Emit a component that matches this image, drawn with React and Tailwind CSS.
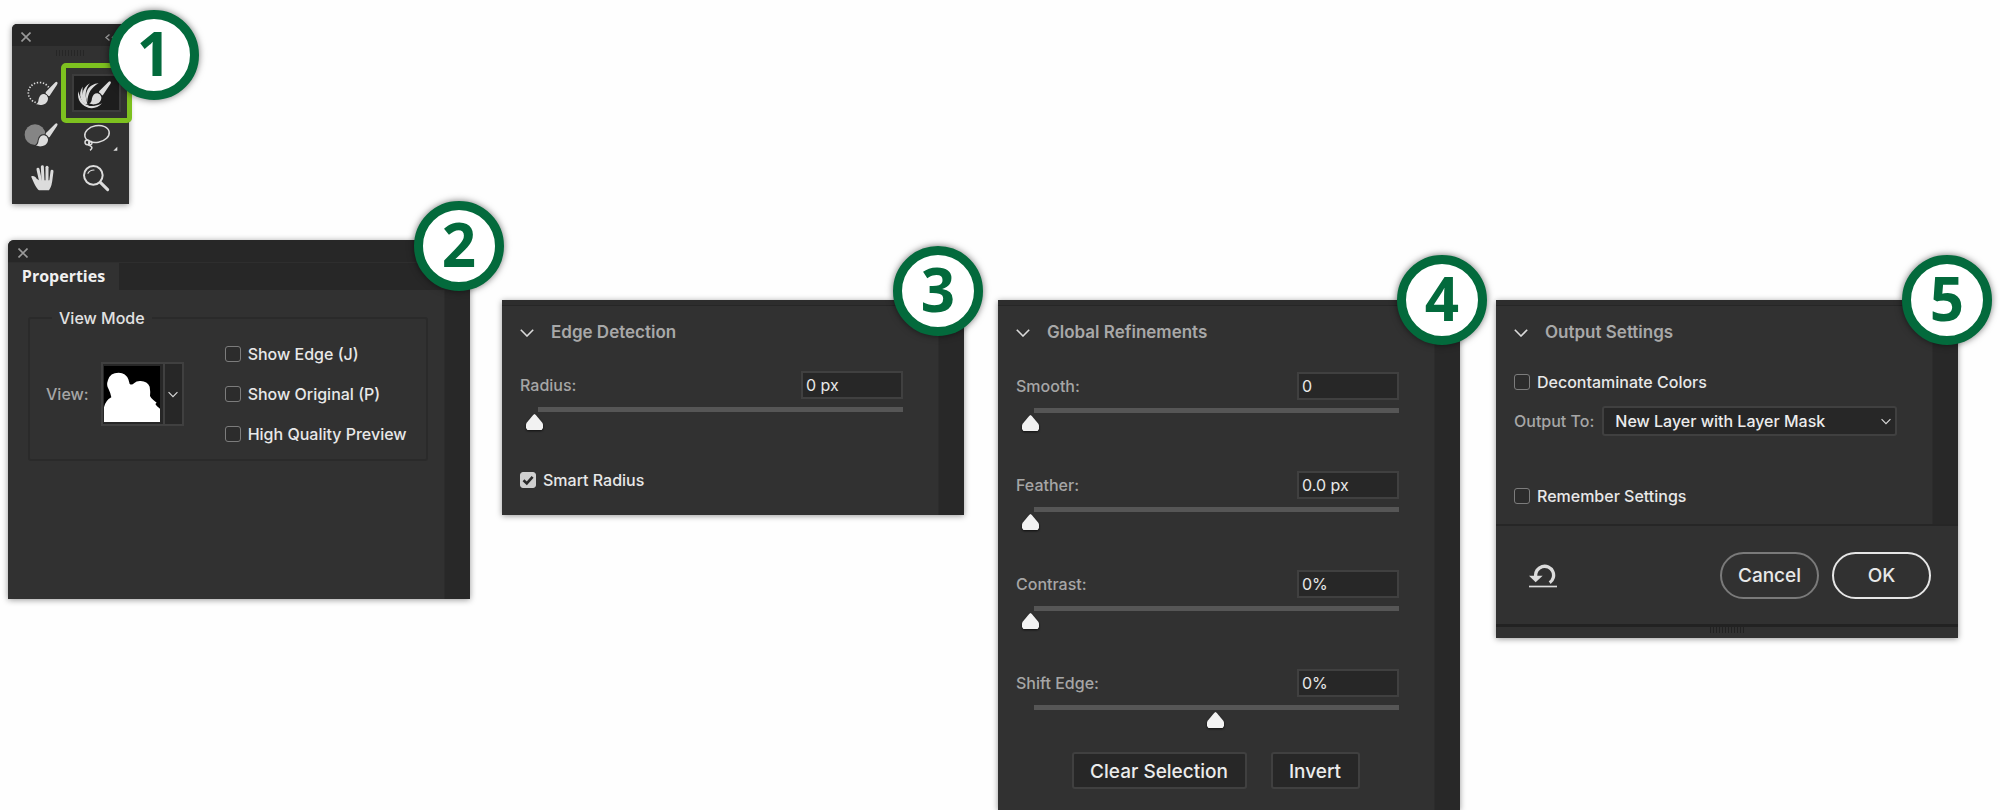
import React from "react";

const font = "font-['Inter','Liberation_Sans',sans-serif]";

function Badge({ n, className }) {
  return (
    <div
      className={`absolute z-10 flex size-[90px] items-center justify-center rounded-full border-[9px] border-[#036a3c] bg-white pb-1 font-['Open_Sans',sans-serif] text-[60px] leading-none font-bold text-[#036a3c] shadow-[0_0_7px_rgba(0,0,0,0.55)] ${className}`}
    >
      {n}
    </div>
  );
}

function CloseIcon() {
  return (
    <svg className="size-[10px]" viewBox="0 0 10 10" stroke="#9a9a9a" strokeWidth="1.6" aria-hidden="true">
      <path d="M0.5 0.5 9.5 9.5M9.5 0.5 0.5 9.5" />
    </svg>
  );
}

function Chevron({ className }) {
  return (
    <svg className={className} viewBox="0 0 14 8" fill="none" stroke="#dadada" strokeWidth="1.6" aria-hidden="true">
      <path d="M0.8 0.8 7 7 13.2 0.8" />
    </svg>
  );
}

function Check({ label, checked = false }) {
  return (
    <label className="flex h-5 items-center gap-[7px] text-[16px] leading-5 font-medium text-[#e8e8e8]">
      <span className="grid size-4 place-items-center">
        <input
          type="checkbox"
          defaultChecked={checked}
          className="peer col-start-1 row-start-1 size-4 appearance-none rounded-[3px] border border-[#7c7c7c] bg-[#2c2c2c] checked:border-[#cfcfcf] checked:bg-[#cfcfcf]"
        />
        <svg
          className="pointer-events-none invisible col-start-1 row-start-1 size-3 peer-checked:visible"
          viewBox="0 0 12 12"
          fill="none"
          stroke="#2b2b2b"
          strokeWidth="2.6"
          aria-hidden="true"
        >
          <path d="M1.5 6.2 4.8 9.4 10.6 2.8" />
        </svg>
      </span>
      {label}
    </label>
  );
}

function SliderRow({ id, label, value, position = 0 }) {
  return (
    <div>
      <div className="flex h-7 items-center justify-between">
        <label htmlFor={id} className="text-[16px] font-medium text-[#a6a6a6]">
          {label}
        </label>
        <input
          id={id}
          type="text"
          defaultValue={value}
          className="h-7 w-[102px] border-2 border-[#404040] bg-[#272727] px-[3px] text-[16px] text-[#e8e8e8]"
        />
      </div>
      <div className="mt-2 ml-[18px] h-[5px] bg-[#565656]" />
      <div className="mt-[2px] -mr-[10px] ml-[6px] flex">
        <input
          type="range"
          min="0"
          max="100"
          defaultValue={position}
          aria-label={label}
          className="h-4 w-full appearance-none bg-transparent drop-shadow-[0_1px_1px_rgba(0,0,0,0.7)] [&::-webkit-slider-thumb]:h-4 [&::-webkit-slider-thumb]:w-[17px] [&::-webkit-slider-thumb]:appearance-none [&::-webkit-slider-thumb]:bg-[#f2f2f2] [&::-webkit-slider-thumb]:[clip-path:polygon(50%_0,58%_6%,96%_54%,100%_64%,100%_88%,92%_100%,8%_100%,0_88%,0_64%,4%_54%,42%_6%)]"
        />
      </div>
    </div>
  );
}

function Section({ title, badge, grow, footer, children, className }) {
  return (
    <section className={`relative flex min-w-0 flex-1 flex-col bg-[#313131] shadow-[0_1px_6px_rgba(0,0,0,0.4)] ${className}`}>
      {badge}
      <div className="h-[6px] border-b border-[#262626] bg-[#2d2d2d]" />
      <div className={`flex ${grow ? "grow" : ""}`}>
        <div className="min-w-0 flex-1 pt-[2px] pr-[35px] pl-[18px]">
          <h2 className="flex h-12 items-center gap-[17px] pt-px text-[17px] font-semibold text-[#a8a8a8]">
            <Chevron className="h-2 w-[14px]" />
            {title}
          </h2>
          {children}
        </div>
        <div className="w-[26px] border-l border-[#2c2c2c] bg-[#282828]" />
      </div>
      {footer}
    </section>
  );
}

function Brush() {
  return (
    <g fill="#dcdcdc">
      <path d="M166 247Q170 244 172 247Q174 250 171 254L149 287Q146 290 142 286L138 282Q135 279 138 275Z" />
      <path d="M133 282Q142 284 144 293C145 305 136 314 124 315C117 316 113 313 108 313C115 309 115 303 116 297C118 287 125 281 133 282Z" />
    </g>
  );
}

function QuickSelectIcon() {
  return (
    <svg viewBox="51 216 159 126" className="h-[42px] w-[53px]" aria-hidden="true">
      <path
        d="M146 262A33 31 0 1 0 108 308"
        fill="none"
        stroke="#dcdcdc"
        strokeWidth="5"
        strokeDasharray="4 5"
      />
      <g stroke="#313131" strokeWidth="4" paintOrder="stroke">
        <Brush />
      </g>
    </svg>
  );
}

function RefineEdgeIcon() {
  return (
    <svg viewBox="210 216 159 126" className="h-[42px] w-[53px]" aria-hidden="true">
      <g fill="#dcdcdc">
        <path d="M235 274C230 300 244 320 272 324C252 312 240 298 235 274Z" />
        <path d="M248 260C232 284 242 308 270 322C252 302 245 284 248 260Z" />
        <path d="M270 250C244 264 240 294 264 316C254 290 254 268 270 250Z" />
        <path d="M296 250C266 252 251 278 262 306C263 280 274 262 296 250Z" />
        <path d="M250 312C262 328 288 330 306 310C286 321 268 320 250 312Z" />
      </g>
      <g transform="translate(160 -2)" stroke="#1d1d1d" strokeWidth="6" paintOrder="stroke">
        <Brush />
      </g>
    </svg>
  );
}

function BrushIcon() {
  return (
    <svg viewBox="51 342 159 126" className="h-[42px] w-[53px]" aria-hidden="true">
      <circle cx="105" cy="404" r="31" fill="#858585" />
      <g transform="translate(0 124)" stroke="#313131" strokeWidth="6" paintOrder="stroke">
        <Brush />
      </g>
    </svg>
  );
}

function LassoIcon() {
  return (
    <svg viewBox="210 342 159 126" className="h-[42px] w-[53px]" fill="none" stroke="#dcdcdc" strokeWidth="4.5" aria-hidden="true">
      <ellipse cx="291" cy="402" rx="37" ry="25" transform="rotate(-10 291 402)" />
      <circle cx="262" cy="427" r="7" />
      <circle cx="271" cy="429" r="5" />
      <path d="M264 434C276 438 280 444 270 451" />
      <path d="M340 452 352 440V452Z" fill="#dcdcdc" stroke="none" />
    </svg>
  );
}

function HandIcon() {
  return (
    <svg viewBox="51 468 159 126" className="h-[42px] w-[53px]" stroke="#dcdcdc" strokeLinecap="round" aria-hidden="true">
      <g strokeWidth="9">
        <path d="M114 508 121 540" />
        <path d="M127 500 129 540" />
        <path d="M141 502 141 540" />
        <path d="M156 514 152 545" />
      </g>
      <path
        d="M94 529C100 526 106 529 110 536L117 541H156C156 556 152 563 147 571H117C109 564 103 552 94 531Z"
        fill="#dcdcdc"
        stroke="none"
      />
    </svg>
  );
}

function ZoomIcon() {
  return (
    <svg viewBox="210 468 159 126" className="h-[42px] w-[53px]" fill="none" stroke="#dcdcdc" strokeLinecap="round" aria-hidden="true">
      <circle cx="280" cy="526" r="28" strokeWidth="6" />
      <path d="M264 520Q269 510 282 510" strokeWidth="3.5" />
      <path d="M301 547 323 569" strokeWidth="9" />
    </svg>
  );
}

function Tool({ label, children }) {
  return (
    <button type="button" aria-label={label} className="flex h-[42px] w-[53px] items-center justify-center">
      {children}
    </button>
  );
}

function ToolPalette() {
  return (
    <section className="relative ml-1 w-[117px] rounded-t-[5px] bg-[#313131] shadow-[0_1px_6px_rgba(0,0,0,0.4)]">
      <Badge n="1" className="-top-[14px] -right-[70px]" />
      <header className="flex h-[22px] items-center justify-between rounded-t-[5px] bg-[#272727] pt-1 pr-[12px] pl-[9px]">
        <button type="button" aria-label="Close tools">
          <CloseIcon />
        </button>
        <svg className="h-[7px] w-3" viewBox="0 0 12 7" fill="none" stroke="#9a9a9a" strokeWidth="1.4" aria-hidden="true">
          <path d="M4.5 0.5 1 3.5 4.5 6.5M11 0.5 7.5 3.5 11 6.5" />
        </svg>
      </header>
      <div className="flex h-[26px] justify-center pt-1">
        <svg className="h-[6px] w-[31px]" viewBox="0 0 31 6" stroke="#262626" aria-hidden="true">
          <path d="M1 3H31" strokeWidth="6" strokeDasharray="1 2" />
        </svg>
      </div>
      <div className="grid grid-cols-[53px_53px] place-items-center justify-start pb-[6px] pl-[5px]">
        <Tool label="Quick selection tool">
          <QuickSelectIcon />
        </Tool>
        <button
          type="button"
          aria-label="Refine edge brush tool"
          aria-pressed="true"
          className="relative flex h-[38px] w-[49px] items-center justify-center border-2 border-[#3c3c3c] bg-[#1d1d1d]"
        >
          <span className="flex shrink-0">
            <RefineEdgeIcon />
          </span>
          <span className="absolute -inset-[13px] rounded-[5px] border-[5px] border-[#7dc11f]" />
        </button>
        <Tool label="Brush tool">
          <BrushIcon />
        </Tool>
        <Tool label="Lasso tool">
          <LassoIcon />
        </Tool>
        <Tool label="Hand tool">
          <HandIcon />
        </Tool>
        <Tool label="Zoom tool">
          <ZoomIcon />
        </Tool>
      </div>
    </section>
  );
}

function ViewPicker() {
  return (
    <div className="flex items-center gap-3">
      <label htmlFor="view" className="text-[16px] font-medium text-[#a6a6a6]">
        View:
      </label>
      <div className="relative flex h-16 w-[83px] items-center border-2 border-[#404040] bg-[#272727]">
        <div className="flex h-full w-[62px] items-center border-r-2 border-[#404040] pl-[1px]">
          <svg className="size-[56px]" viewBox="0 0 168 168" aria-hidden="true">
            <rect width="168" height="168" fill="#000" />
            <path
              d="M0 168V124Q4 104 22 94Q20 82 14 70Q6 58 12 42Q18 20 44 20Q66 21 73 40Q76 50 77 54Q84 58 90 52Q98 44 110 45Q130 46 137 62Q140 80 138 90Q142 98 148 102L158 110L154 114Q158 122 168 128V168Z"
              fill="#fff"
            />
          </svg>
        </div>
        <div className="flex flex-1 justify-center">
          <Chevron className="h-[7px] w-[10px]" />
        </div>
        <select id="view" className="absolute inset-0 h-full w-full cursor-pointer opacity-0" />
      </div>
    </div>
  );
}

function PropertiesPanel() {
  return (
    <section className="relative rounded-t-[6px] bg-[#313131] shadow-[0_1px_6px_rgba(0,0,0,0.4)]">
      <Badge n="2" className="-top-[39px] -right-[34px]" />
      <header className="flex h-[23px] items-center rounded-t-[6px] border-b border-[#2e2e2e] bg-[#272727] pt-[3px] pl-[10px]">
        <button type="button" aria-label="Close properties">
          <CloseIcon />
        </button>
      </header>
      <div className="flex h-[27px] bg-[#272727]">
        <h2 className="flex w-[111px] items-center justify-center bg-[#313131] pb-[2px] font-['Open_Sans',sans-serif] text-[16px] font-bold text-[#f0f0f0]">
          Properties
        </h2>
      </div>
      <div className="flex h-[309px]">
        <div className="min-w-0 flex-1 pt-[18px] pr-4 pl-5">
          <fieldset className="h-[153px] rounded-[3px] border-2 border-[#2a2a2a] px-4">
            <legend className="ml-[6px] px-[7px] text-[16px] leading-5 font-medium text-[#e2e2e2]">View Mode</legend>
            <div className="flex gap-[41px] pt-[16px]">
              <ViewPicker />
              <div className="flex flex-col gap-5">
                <Check label="Show Edge (J)" />
                <Check label="Show Original (P)" />
                <Check label="High Quality Preview" />
              </div>
            </div>
          </fieldset>
        </div>
        <div className="w-[26px] border-l border-[#2c2c2c] bg-[#282828]" />
      </div>
    </section>
  );
}

function OutputFooter() {
  return (
    <footer className="border-t-2 border-[#262626]">
      <div className="flex h-[98px] items-center justify-between pt-px pr-[27px] pl-[33px]">
        <button type="button" aria-label="Reset settings">
          <svg className="h-6 w-7" viewBox="0 0 84 72" aria-hidden="true">
            <path d="M20 37A27 27 0 1 1 62 56" fill="none" stroke="#dcdcdc" strokeWidth="10" />
            <path d="M0 35H41L20 55Z" fill="#dcdcdc" />
            <rect y="65" width="84" height="5" fill="#dcdcdc" />
          </svg>
        </button>
        <div className="flex gap-[13px] text-[19px] font-medium text-[#e8e8e8]">
          <button type="button" className="h-[47px] w-[99px] rounded-full border-2 border-[#7a7a7a] pt-[2px]">
            Cancel
          </button>
          <button type="button" className="h-[47px] w-[99px] rounded-full border-2 border-[#e6e6e6] pt-[2px]">
            OK
          </button>
        </div>
      </div>
      <div className="flex h-[14px] justify-center border-t-[3px] border-[#222222]">
        <svg className="h-[6px] w-[34px]" viewBox="0 0 34 6" stroke="#222222" aria-hidden="true">
          <path d="M0 3H34" strokeWidth="6" strokeDasharray="1 2" />
        </svg>
      </div>
    </footer>
  );
}

export default function App() {
  return (
    <main className={`flex min-h-screen items-start overflow-hidden bg-[#fefefe] pr-[42px] pl-2 ${font}`}>
      <div className="flex min-w-0 flex-1 flex-col gap-9 pt-6">
        <ToolPalette />
        <PropertiesPanel />
      </div>

      <Section title="Edge Detection" className="mt-[300px] ml-8" badge={<Badge n="3" className="-top-[54px] -right-[19px]" />}>
        <div className="pt-[15px] pb-[25px]">
          <SliderRow id="radius" label="Radius:" value="0 px" />
          <div className="mt-10">
            <Check label="Smart Radius" checked />
          </div>
        </div>
      </Section>

      <Section
        title="Global Refinements"
        grow
        className="mt-[300px] ml-[34px] self-stretch"
        badge={<Badge n="4" className="-top-[45px] -right-[27px]" />}
      >
        <div className="flex flex-col gap-10 pt-4">
          <SliderRow id="smooth" label="Smooth:" value="0" />
          <SliderRow id="feather" label="Feather:" value="0.0 px" />
          <SliderRow id="contrast" label="Contrast:" value="0%" />
          <SliderRow id="shift-edge" label="Shift Edge:" value="0%" position={50} />
        </div>
        <div className="mt-6 flex justify-center gap-6 pl-4 text-[19px] font-medium text-[#ececec]">
          <button type="button" className="h-[37px] w-[175px] rounded-[3px] border-2 border-[#404040] bg-[#272727] pt-1">
            Clear Selection
          </button>
          <button type="button" className="h-[37px] w-[89px] rounded-[3px] border-2 border-[#404040] bg-[#272727] pt-1">
            Invert
          </button>
        </div>
      </Section>

      <Section
        title="Output Settings"
        className="mt-[300px] ml-9"
        badge={<Badge n="5" className="-top-[45px] -right-[34px]" />}
        footer={<OutputFooter />}
      >
        <div className="pt-4 pb-[18px]">
          <Check label="Decontaminate Colors" />
          <div className="mt-[14px] flex h-[30px] items-center gap-2">
            <label htmlFor="output-to" className="text-[16px] font-medium whitespace-nowrap text-[#a6a6a6]">
              Output To:
            </label>
            <div className="grid min-w-0 flex-1 items-center">
              <select
                id="output-to"
                className="col-start-1 row-start-1 h-[30px] w-full appearance-none rounded-[3px] border-2 border-[#404040] bg-[#272727] pr-8 pl-[11px] text-[16px] font-medium text-[#ececec]"
              >
                <option>New Layer with Layer Mask</option>
              </select>
              <Chevron className="pointer-events-none col-start-1 row-start-1 mr-[6px] h-[7px] w-[10px] justify-self-end" />
            </div>
          </div>
          <div className="mt-[50px]">
            <Check label="Remember Settings" />
          </div>
        </div>
      </Section>
    </main>
  );
}
